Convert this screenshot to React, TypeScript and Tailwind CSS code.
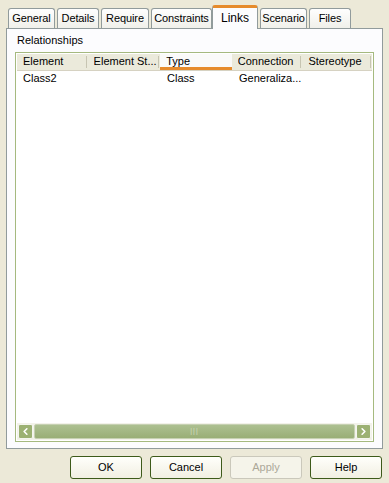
import { ChevronLeft, ChevronRight } from 'lucide-react';

const tabs = ['General', 'Details', 'Require', 'Constraints', 'Links', 'Scenario', 'Files'];
const tabWidths = [47, 42, 48, 61, 46, 47, 42];

const columns = [
  { label: 'Element', w: 71 },
  { label: 'Element St...', w: 73 },
  { label: 'Type', w: 72, active: true },
  { label: 'Connection', w: 71 },
  { label: 'Stereotype', w: 70 },
];

function Tab({ label, width, active }: { label: string; width: number; active?: boolean }) {
  if (active) {
    return (
      <div
        className="relative z-10 -mb-px -ml-[2px] flex h-[24px] items-center justify-center rounded-t-[3px] border border-b-0 border-[#919b9c] border-t-[#e68b2c] border-t-[3px] bg-[#fcfcfe] pb-[2px] text-[12px]"
        style={{ width }}
      >
        {label}
      </div>
    );
  }
  return (
    <div
      className="flex h-[20px] items-center justify-center rounded-t-[3px] border border-b-0 border-[#919b9c] bg-gradient-to-b from-[#fefefe] to-[#f0f0ea] tracking-[-0.1px]"
      style={{ width }}
    >
      {label}
    </div>
  );
}

function XpButton({ label, disabled }: { label: string; disabled?: boolean }) {
  return (
    <button
      className={
        disabled
          ? 'h-[23px] w-[72px] rounded-[3px] border border-[#cac8bb] bg-[#f5f4ea] text-[#aca899]'
          : 'h-[23px] w-[72px] rounded-[3px] border border-[#3d5a1a] bg-gradient-to-b from-[#fffffb] to-[#f1efe2] text-black'
      }
    >
      {label}
    </button>
  );
}

export default function App() {
  return (
    <div
      className="flex h-[483px] w-[389px] flex-col bg-[#ece9d8] text-[11px] text-black"
      style={{ fontFamily: 'Tahoma, "Liberation Sans", Arial, sans-serif' }}
    >
      <div className="flex items-end gap-[2px] pl-[8px] pt-[5px]">
        {tabs.map((t, i) => (
          <Tab key={t} label={t} width={tabWidths[i]} active={t === 'Links'} />
        ))}
      </div>

      <div className="mx-[6px] flex h-[421px] flex-col border border-[#919b9c] bg-[#fcfcfe] px-[8px] pb-[6px]">
        <div className="pl-[2px] pt-[3px] pb-[3px]">Relationships</div>
        <div className="flex flex-1 flex-col border border-[#a5b97f] bg-white p-px">
          <div className="flex h-[17px] border-b border-[#d6d2c2] bg-[#ebeadb]">
            {columns.map((c) => (
              <div
                key={c.label}
                className={
                  c.active
                    ? 'flex items-center border-b-[3px] border-[#e68b2c] bg-[#fafaf9] pl-[6px] pt-[3px]'
                    : 'flex items-center pl-[6px]'
                }
                style={{ width: c.w }}
              >
                <span className="flex-1 overflow-hidden whitespace-nowrap">{c.label}</span>
                {!c.active && <span className="mr-px h-[12px] w-px bg-[#c7c5b2]" />}
              </div>
            ))}
          </div>
          <div className="flex h-[16px] items-center">
            <div className="pl-[6px]" style={{ width: 144 }}>Class2</div>
            <div className="pl-[6px]" style={{ width: 72 }}>Class</div>
            <div className="pl-[6px]" style={{ width: 71 }}>Generaliza...</div>
          </div>
          <div className="flex-1" />
          <div className="flex h-[17px] items-center gap-px bg-[#f3f2ea] p-px">
            <div className="flex h-[15px] w-[15px] items-center justify-center rounded-[2px] border border-[#f4f6ef] bg-[#9cb173] text-white">
              <ChevronLeft size={11} strokeWidth={3.5} />
            </div>
            <div className="flex h-[15px] flex-1 items-center justify-center rounded-[2px] border border-[#c6d1b2] bg-gradient-to-b from-[#adc091] to-[#99ae76]">
              <span className="text-[7px] tracking-[1px] text-[#d4dfbf]">|||</span>
            </div>
            <div className="flex h-[15px] w-[15px] items-center justify-center rounded-[2px] border border-[#f4f6ef] bg-[#9cb173] text-white">
              <ChevronRight size={11} strokeWidth={3.5} />
            </div>
          </div>
        </div>
      </div>

      <div className="flex justify-end gap-[8px] pr-[7px] pt-[7px]">
        <XpButton label="OK" />
        <XpButton label="Cancel" />
        <XpButton label="Apply" disabled />
        <XpButton label="Help" />
      </div>
    </div>
  );
}
